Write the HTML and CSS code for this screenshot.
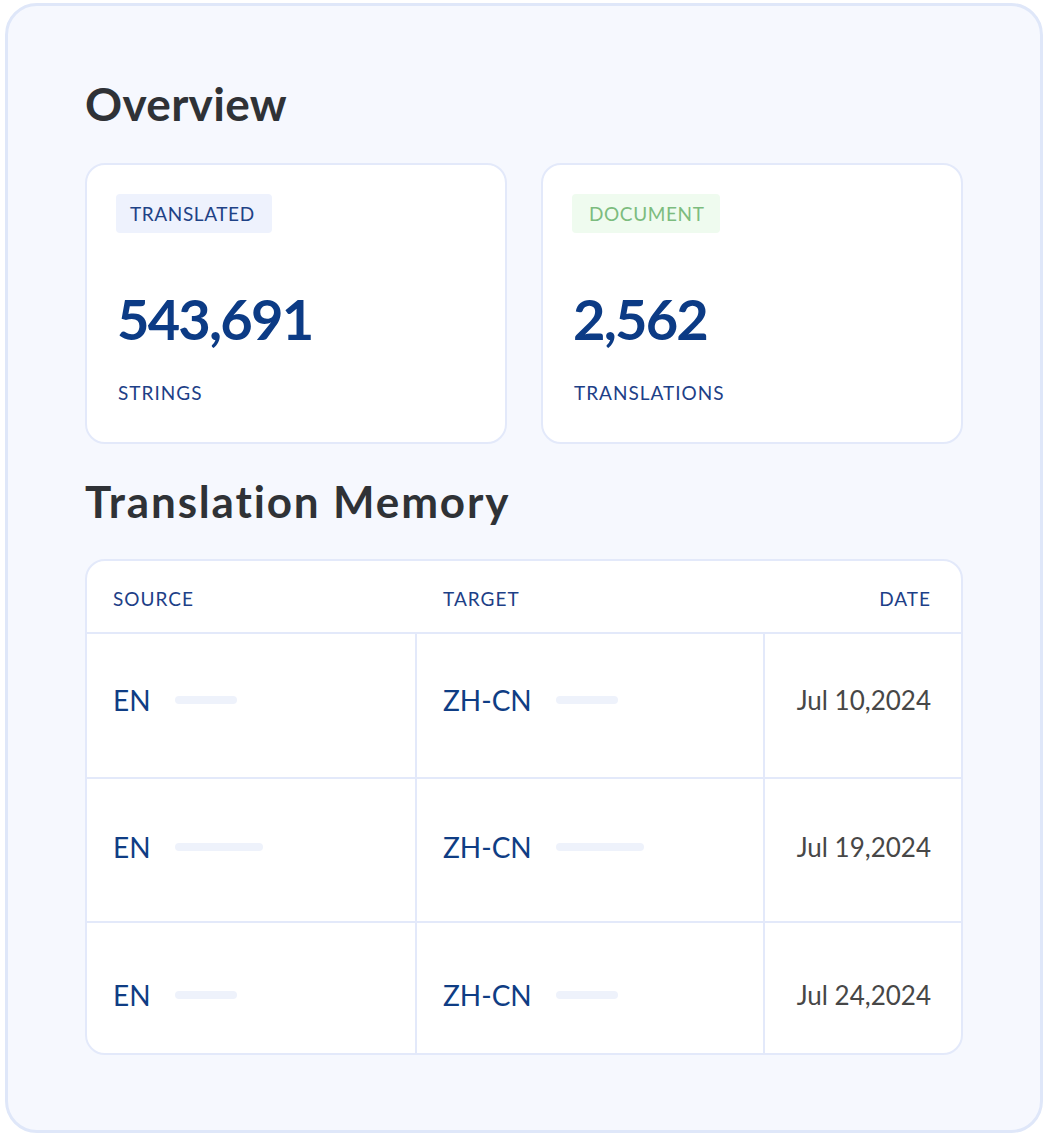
FILE: index.html
```html
<!DOCTYPE html>
<html lang="en">
<head>
<meta charset="utf-8">
<title>Overview</title>
<link rel="stylesheet" href="styles.css">
</head>
<body>
<div class="panel">
  <h1 class="title title-overview">Overview</h1>
  <div class="stats">
    <div class="stat-card">
      <span class="badge badge-blue">TRANSLATED</span>
      <div class="stat-value">543,691</div>
      <div class="stat-label">STRINGS</div>
    </div>
    <div class="stat-card">
      <span class="badge badge-green">DOCUMENT</span>
      <div class="stat-value">2,562</div>
      <div class="stat-label">TRANSLATIONS</div>
    </div>
  </div>
  <h2 class="title title-memory">Translation Memory</h2>
  <div class="memory">
    <div class="mem-head">
      <div class="hcell">SOURCE</div>
      <div class="hcell">TARGET</div>
      <div class="hcell hcell-date">DATE</div>
    </div>
    <div class="mem-row row-1">
      <div class="cell"><span class="lang">EN</span><span class="bar bar-short"></span></div>
      <div class="cell cell-mid"><span class="lang">ZH-CN</span><span class="bar bar-short"></span></div>
      <div class="cell cell-date"><span class="date">Jul 10,2024</span></div>
    </div>
    <div class="mem-row row-2">
      <div class="cell"><span class="lang">EN</span><span class="bar bar-long"></span></div>
      <div class="cell cell-mid"><span class="lang">ZH-CN</span><span class="bar bar-long"></span></div>
      <div class="cell cell-date"><span class="date">Jul 19,2024</span></div>
    </div>
    <div class="mem-row row-3">
      <div class="cell"><span class="lang">EN</span><span class="bar bar-short"></span></div>
      <div class="cell cell-mid"><span class="lang">ZH-CN</span><span class="bar bar-short"></span></div>
      <div class="cell cell-date"><span class="date">Jul 24,2024</span></div>
    </div>
  </div>
</div>
</body>
</html>
```

FILE: styles.css
```css
* { box-sizing: border-box; }

html, body {
  margin: 0;
  padding: 0;
  background: #ffffff;
}

body {
  font-family: Lato, "Noto Sans", "DejaVu Sans", sans-serif;
  padding-top: 3px;
  padding-left: 5px;
}

.panel {
  width: 1038px;
  height: 1130px;
  border: 3px solid #dfe7f9;
  border-radius: 32px;
  background: #f6f8fe;
  padding: 70px 0 0 77px;
}

.title {
  margin: 0;
  color: #2f3236;
  font-weight: 700;
}

.title-overview {
  font-size: 46px;
  line-height: 55px;
  letter-spacing: 0.3px;
}

.title-memory {
  font-size: 44px;
  line-height: 53px;
  letter-spacing: 1.85px;
  margin-top: 31px;
}

.stats {
  display: flex;
  gap: 34px;
  margin-top: 32px;
  width: 878px;
}

.stat-card {
  width: 422px;
  height: 281px;
  background: #ffffff;
  border: 2px solid #e3e9fa;
  border-radius: 20px;
  padding: 29px 0 0 29px;
  display: flex;
  flex-direction: column;
  align-items: flex-start;
}

.badge {
  display: inline-block;
  height: 39px;
  line-height: 39px;
  padding: 0 14px;
  border-radius: 4px;
  font-size: 19px;
  letter-spacing: 0.6px;
}

.badge-blue {
  background: #eef2fd;
  color: #1f4286;
  padding: 0 17px 0 14px;
}

.badge-green {
  background: #effbef;
  color: #7cbc7e;
  padding: 0 16px 0 17px;
}

.stat-value {
  margin-top: 52px;
  margin-left: 1px;
  font-size: 56px;
  line-height: 67px;
  font-weight: 700;
  color: #0c3b85;
  letter-spacing: -1.8px;
}

.stat-label {
  margin-top: 29px;
  margin-left: 2px;
  font-size: 19px;
  line-height: 23px;
  letter-spacing: 1px;
  color: #1d4087;
}

.memory {
  margin-top: 31px;
  width: 878px;
  height: 496px;
  background: #ffffff;
  border: 2px solid #e3e9fa;
  border-radius: 20px;
  overflow: hidden;
}

.mem-head {
  display: grid;
  grid-template-columns: 328px 348px 198px;
  height: 73px;
  border-bottom: 2px solid #e3e9fa;
}

.hcell {
  padding: 26px 0 0 26px;
  font-size: 19px;
  line-height: 23px;
  letter-spacing: 1px;
  color: #1d4087;
}

.hcell:nth-child(2) {
  padding-left: 28px;
}

.hcell-date {
  text-align: right;
  padding: 26px 30px 0 0;
}

.mem-row {
  display: grid;
  grid-template-columns: 328px 348px 198px;
  border-bottom: 2px solid #e3e9fa;
}

.row-1 { height: 145px; }
.row-2 { height: 144px; }
.row-3 { height: 130px; border-bottom: none; }

.cell {
  display: flex;
  align-items: center;
  padding-left: 26px;
}

.cell-mid {
  border-left: 2px solid #e3e9fa;
}

.cell-date {
  border-left: 2px solid #e3e9fa;
  justify-content: flex-end;
  padding-left: 0;
  padding-right: 30px;
}

.row-1 .cell { padding-bottom: 12px; }
.row-2 .cell { padding-bottom: 6px; }
.row-3 .cell { padding-top: 14px; }

.lang {
  font-size: 28px;
  line-height: 34px;
  color: #0f3d84;
}

.date {
  font-size: 26px;
  line-height: 34px;
  color: #474747;
}

.bar {
  display: inline-block;
  height: 8px;
  border-radius: 4px;
  background: #eef2fb;
  margin-left: 24px;
}

.bar-short { width: 62px; }
.bar-long { width: 88px; }
```
